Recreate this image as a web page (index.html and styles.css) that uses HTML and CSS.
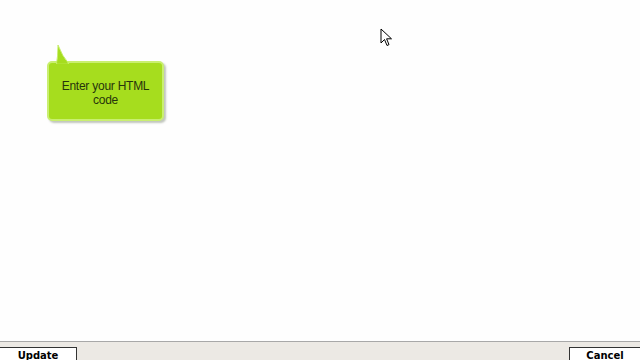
FILE: index.html
```
<!DOCTYPE html>
<html>
<head>
<meta charset="utf-8">
<link rel="stylesheet" href="styles.css">
</head>
<body>
<div class="page">
  <div class="canvas">
    <div class="bubble">
      <svg class="tail" width="16" height="20" viewBox="0 0 16 20"><path d="M1.5 20 Q3 12 3 1 Q7 12 14 20 Z" fill="#a6dd1e" stroke="#c6ee6a" stroke-width="1"/><path d="M2.5 19.5 Q3.6 12 3.4 4 Q7 13 12.5 19.5 Z" fill="#a6dd1e"/></svg>
      <div class="bubble-text">Enter your HTML code</div>
    </div>
    <svg class="cursor" width="14" height="20" viewBox="0 0 14 20"><path d="M1 1 L1 15 L4.5 11.5 L7 17.5 L9 16.6 L6.6 10.8 L11.5 10.8 Z" fill="#fff" stroke="#000" stroke-width="1" stroke-linejoin="miter"/></svg>
  </div>
  <div class="footer">
    <button class="btn btn-left">Update</button>
    <button class="btn btn-right">Cancel</button>
  </div>
</div>
</body>
</html>
```
FILE: styles.css
```
html, body { margin: 0; padding: 0; }
body { width: 640px; height: 360px; overflow: hidden; background: #fff; font-family: "Liberation Sans", Arial, sans-serif; }
.page { display: flex; flex-direction: column; height: 360px; }
.canvas { position: relative; flex: 0 0 341px; background: #fefefe; }
.bubble { position: absolute; left: 47px; top: 61px; width: 113px; height: 56px; background: #a6dd1e; border: 2px solid #c9ef70; border-radius: 5px; box-shadow: 2px 2px 2px rgba(120,130,110,0.45); display: flex; align-items: center; justify-content: center; }
.tail { position: absolute; left: 6px; top: -19px; }
.bubble-text { font-size: 12px; line-height: 14px; color: #26340c; text-align: center; letter-spacing: -0.25px; width: 100px; margin-top: 3px; }
.cursor { position: absolute; left: 380px; top: 28px; }
.footer { flex: 1; background: #ece9e4; border-top: 1px solid #a8a8a8; display: flex; justify-content: space-between; align-items: flex-start; padding-top: 5px; }
.btn { font-family: "DejaVu Sans", Verdana, sans-serif; font-weight: bold; font-size: 10px; color: #000; background: #fff; border: 1px solid #333; border-bottom: none; padding: 2px 0 0 0; height: 14px; line-height: 12px; }
.btn-left { width: 77px; border-left: none; }
.btn-right { width: 71px; border-right: none; }
```
